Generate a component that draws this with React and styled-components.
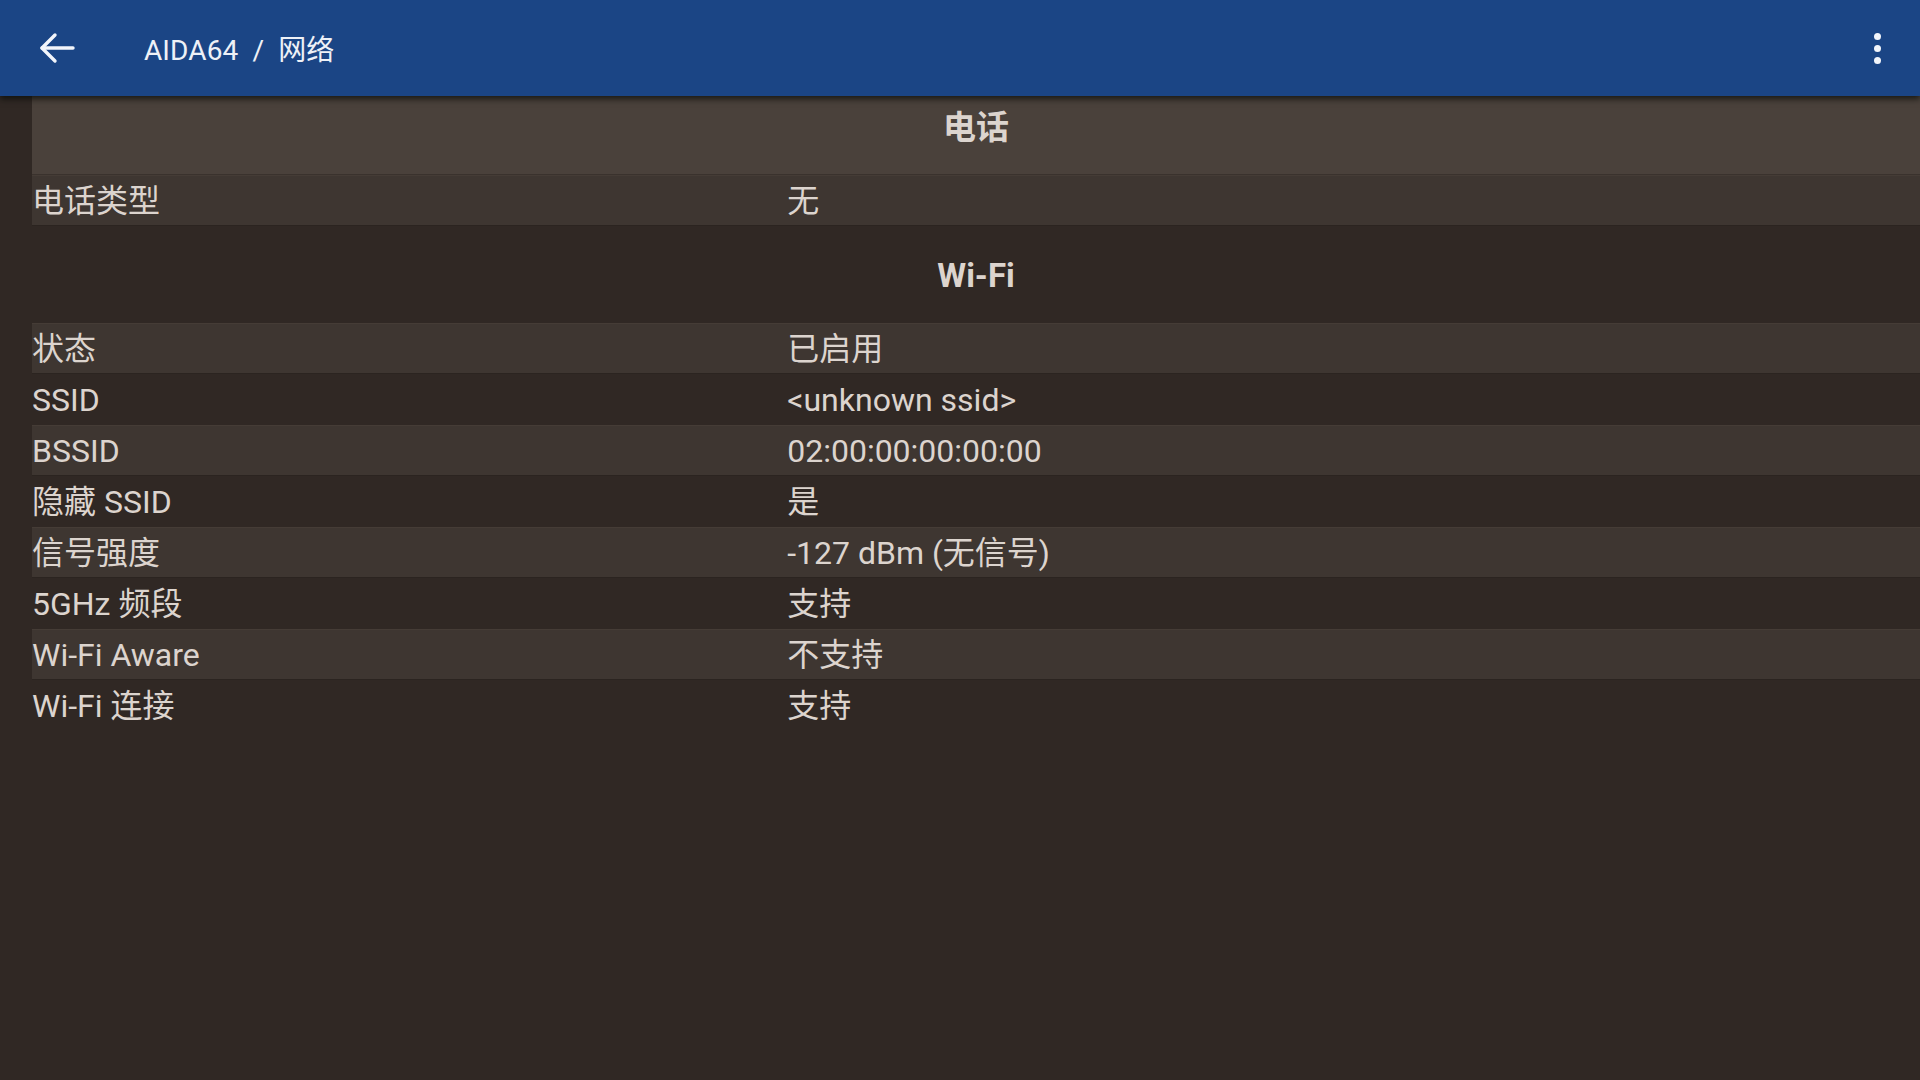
import React from "react";
import styled, { createGlobalStyle } from "styled-components";

const GlobalStyle = createGlobalStyle`
  html, body {
    margin: 0;
    padding: 0;
    background: #302824;
  }
  * { box-sizing: border-box; }
`;

const FONT = `Roboto, "Noto Sans CJK SC", "Noto Sans", sans-serif`;

const Page = styled.div`
  min-height: 100vh;
  background: #302824;
  font-family: ${FONT};
  color: #dcd4ce;
  display: flex;
  flex-direction: column;
`;

const TopBar = styled.header`
  position: relative;
  z-index: 2;
  height: 96px;
  background: #1b4585;
  display: flex;
  align-items: center;
  padding: 0 39px 0 39px;
  box-shadow: 0 3px 6px rgba(10, 12, 8, 0.75);
`;

const IconButton = styled.button`
  border: none;
  background: none;
  padding: 0;
  width: 36px;
  height: 32px;
  display: flex;
  align-items: center;
  justify-content: center;
  cursor: pointer;
`;

const Title = styled.div`
  margin-left: 69px;
  font-size: 28px;
  color: #eef1f7;
  letter-spacing: 0.1px;
  flex: 1;
  white-space: pre;
`;

const Dots = styled.div`
  display: flex;
  flex-direction: column;
  gap: 5px;
`;

const Dot = styled.span`
  width: 7px;
  height: 7px;
  border-radius: 50%;
  background: #f2f5fb;
`;

const Body = styled.main`
  flex: 1;
  padding-left: 32px;
`;

const SectionTitle = styled.div`
  height: ${(p) => p.$h}px;
  background: ${(p) => (p.$shaded ? "#4a413b" : "transparent")};
  border-bottom: 1px solid ${(p) => (p.$shaded ? "#3a322d" : "transparent")};
  display: flex;
  align-items: center;
  justify-content: center;
  font-size: 33px;
  font-weight: 700;
  color: #dcd4ce;
  padding-top: ${(p) => p.$pt || 0}px;
  padding-bottom: ${(p) => p.$pb || 0}px;
`;

const Row = styled.div`
  display: grid;
  grid-template-columns: 40% 60%;
  align-items: center;
  height: 51px;
  font-size: 32px;
  background: ${(p) => (p.$shaded ? "#3e3631" : "transparent")};
  border-top: 1px solid ${(p) => (p.$shaded ? "#453c36" : "transparent")};
  border-bottom: 1px solid ${(p) => (p.$shaded ? "#2b2420" : "transparent")};
`;

const Cell = styled.span`
  white-space: pre;
  color: #dcd4ce;
  line-height: 1;
`;

const ArrowIcon = () => (
  <svg width="36" height="32" viewBox="0 0 36 32" fill="none">
    <path d="M3 16 H34" stroke="#f2f5fb" strokeWidth="3.4" strokeLinecap="round" />
    <path d="M16 3 L3 16 L16 29" stroke="#f2f5fb" strokeWidth="3.4" strokeLinecap="round" strokeLinejoin="round" />
  </svg>
);

const sections = [
  {
    title: "电话",
    height: 79,
    pt: 0,
    pb: 21,
    shaded: true,
    rows: [["电话类型", "无"]],
  },
  {
    title: "Wi-Fi",
    height: 97,
    pt: 2,
    pb: 0,
    shaded: false,
    rows: [
      ["状态", "已启用"],
      ["SSID", "<unknown ssid>"],
      ["BSSID", "02:00:00:00:00:00"],
      ["隐藏 SSID", "是"],
      ["信号强度", "-127 dBm (无信号)"],
      ["5GHz 频段", "支持"],
      ["Wi-Fi Aware", "不支持"],
      ["Wi-Fi 连接", "支持"],
    ],
  },
];

export default function App() {
  return (
    <>
      <GlobalStyle />
      <Page>
        <TopBar>
          <IconButton aria-label="back">
            <ArrowIcon />
          </IconButton>
          <Title>AIDA64  /  网络</Title>
          <Dots>
            <Dot />
            <Dot />
            <Dot />
          </Dots>
        </TopBar>
        <Body>
          {sections.map((s) => (
            <section key={s.title}>
              <SectionTitle $h={s.height} $shaded={s.shaded} $pt={s.pt} $pb={s.pb}>
                {s.title}
              </SectionTitle>
              {s.rows.map(([k, v], i) => (
                <Row key={k} $shaded={i % 2 === 0}>
                  <Cell>{k}</Cell>
                  <Cell>{v}</Cell>
                </Row>
              ))}
            </section>
          ))}
        </Body>
      </Page>
    </>
  );
}
